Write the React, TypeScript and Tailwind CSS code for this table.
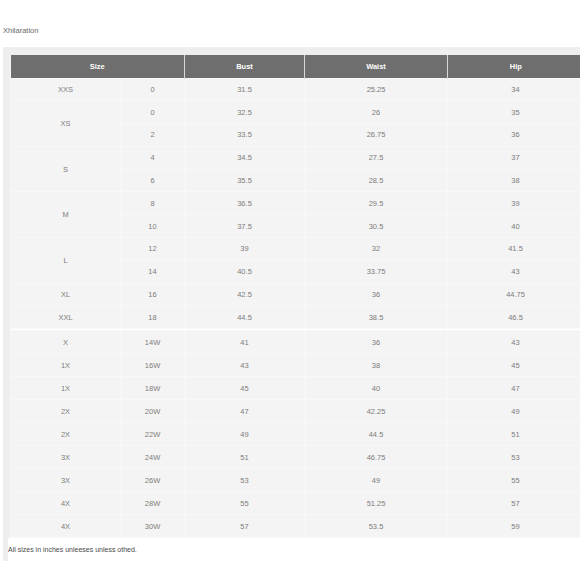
const top: [string, number, string, string, string, string][] = [
  ['XXS', 1, '0', '31.5', '25.25', '34'],
  ['XS', 2, '0', '32.5', '26', '35'],
  ['', 0, '2', '33.5', '26.75', '36'],
  ['S', 2, '4', '34.5', '27.5', '37'],
  ['', 0, '6', '35.5', '28.5', '38'],
  ['M', 2, '8', '36.5', '29.5', '39'],
  ['', 0, '10', '37.5', '30.5', '40'],
  ['L', 2, '12', '39', '32', '41.5'],
  ['', 0, '14', '40.5', '33.75', '43'],
  ['XL', 1, '16', '42.5', '36', '44.75'],
  ['XXL', 1, '18', '44.5', '38.5', '46.5'],
];

const plus: string[][] = [
  ['X', '14W', '41', '36', '43'],
  ['1X', '16W', '43', '38', '45'],
  ['1X', '18W', '45', '40', '47'],
  ['2X', '20W', '47', '42.25', '49'],
  ['2X', '22W', '49', '44.5', '51'],
  ['3X', '24W', '51', '46.75', '53'],
  ['3X', '26W', '53', '49', '55'],
  ['4X', '28W', '55', '51.25', '57'],
  ['4X', '30W', '57', '53.5', '59'],
];

const td = 'border border-[#f8f8f8] p-0 text-center align-middle';

export default function App() {
  return (
    <div className="h-[580px] w-[580px] overflow-hidden bg-white text-[#7c7c7c]" style={{ fontFamily: '"Liberation Sans", Arial, sans-serif' }}>
      <div className="pl-[3px] pt-[26px] text-[7.5px] leading-[10px] text-[#6a6a6a]">Xhilaration</div>
      <div className="ml-[3px] mt-[11px] w-[580px] border-l-[7px] border-t-[8px] border-[#eeeeee]">
        <table className="w-[573px] table-fixed border-collapse bg-[#f4f4f4] text-[7.5px]">
          <colgroup>
            <col className="w-[110px]" />
            <col className="w-[64px]" />
            <col className="w-[120px]" />
            <col className="w-[143px]" />
            <col className="w-[136px]" />
          </colgroup>
          <thead>
            <tr className="h-[23px] bg-[#6e6e6e] text-[7.5px] font-bold text-white">
              <th colSpan={2} className="border-r border-[#d8d8d8] p-0">Size</th>
              <th className="border-r border-[#d8d8d8] p-0">Bust</th>
              <th className="border-r border-[#d8d8d8] p-0">Waist</th>
              <th className="p-0">Hip</th>
            </tr>
          </thead>
          <tbody>
            {top.map(([size, span, num, bust, waist, hip], i) => (
              <tr key={i} className="h-[22.8px]">
                {span > 0 && (
                  <td rowSpan={span} className={td}>
                    {size}
                  </td>
                )}
                <td className={td}>{num}</td>
                <td className={td}>{bust}</td>
                <td className={td}>{waist}</td>
                <td className={td}>{hip}</td>
              </tr>
            ))}
            <tr className="h-[2px] bg-white">
              <td colSpan={5} className="p-0" />
            </tr>
            {plus.map((row, i) => (
              <tr key={i} className="h-[23px]">
                {row.map((c, j) => (
                  <td key={j} className={td}>
                    {c}
                  </td>
                ))}
              </tr>
            ))}
          </tbody>
        </table>
        <div className="-ml-[2px] h-[23px] bg-white pt-[7px] text-[7px] leading-[9px] text-[#4a4a4a]">
          All sizes in inches unleeses unless othed.
        </div>
      </div>
    </div>
  );
}
